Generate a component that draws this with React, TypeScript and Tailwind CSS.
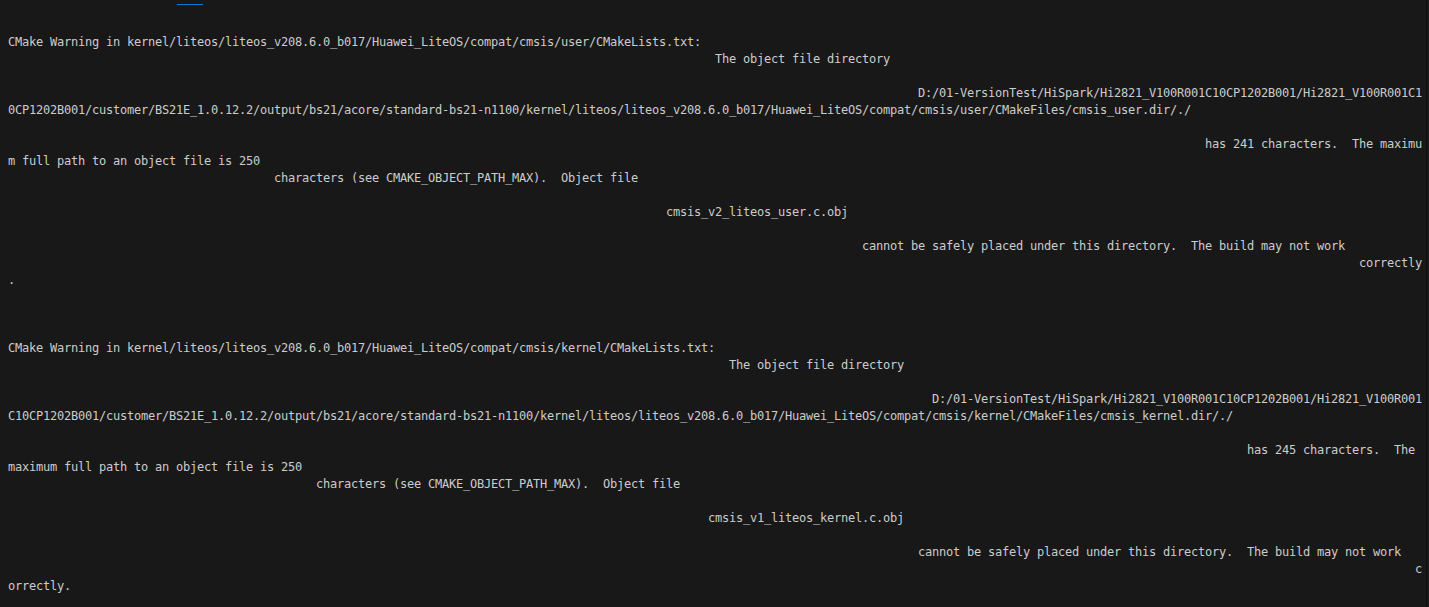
import React from "react";

type Row = [number, string];

const rows: Row[] = [
  [0, "CMake Warning in kernel/liteos/liteos_v208.6.0_b017/Huawei_LiteOS/compat/cmsis/user/CMakeLists.txt:"],
  [101, "The object file directory"],
  [0, ""],
  [130, "D:/01-VersionTest/HiSpark/Hi2821_V100R001C10CP1202B001/Hi2821_V100R001C1"],
  [0, "0CP1202B001/customer/BS21E_1.0.12.2/output/bs21/acore/standard-bs21-n1100/kernel/liteos/liteos_v208.6.0_b017/Huawei_LiteOS/compat/cmsis/user/CMakeFiles/cmsis_user.dir/./"],
  [0, ""],
  [171, "has 241 characters.  The maximu"],
  [0, "m full path to an object file is 250"],
  [38, "characters (see CMAKE_OBJECT_PATH_MAX).  Object file"],
  [0, ""],
  [94, "cmsis_v2_liteos_user.c.obj"],
  [0, ""],
  [122, "cannot be safely placed under this directory.  The build may not work"],
  [193, "correctly"],
  [0, "."],
  [0, ""],
  [0, ""],
  [0, ""],
  [0, "CMake Warning in kernel/liteos/liteos_v208.6.0_b017/Huawei_LiteOS/compat/cmsis/kernel/CMakeLists.txt:"],
  [103, "The object file directory"],
  [0, ""],
  [132, "D:/01-VersionTest/HiSpark/Hi2821_V100R001C10CP1202B001/Hi2821_V100R001"],
  [0, "C10CP1202B001/customer/BS21E_1.0.12.2/output/bs21/acore/standard-bs21-n1100/kernel/liteos/liteos_v208.6.0_b017/Huawei_LiteOS/compat/cmsis/kernel/CMakeFiles/cmsis_kernel.dir/./"],
  [0, ""],
  [177, "has 245 characters.  The"],
  [0, "maximum full path to an object file is 250"],
  [44, "characters (see CMAKE_OBJECT_PATH_MAX).  Object file"],
  [0, ""],
  [100, "cmsis_v1_liteos_kernel.c.obj"],
  [0, ""],
  [130, "cannot be safely placed under this directory.  The build may not work"],
  [201, "c"],
  [0, "orrectly."],
];

export default function App() {
  return (
    <div className="flex h-[607px] w-[1429px] overflow-hidden bg-[#181818]">
      <div className="flex min-w-0 flex-1 flex-col">
        <div className="h-[34px] shrink-0">
          <div className="ml-[177px] mt-[4px] h-px w-[26px] bg-[#0078d4]" />
        </div>
        <div
          className="pl-[8px] text-[12px] leading-[17px] tracking-[-0.2246px] text-[#cccccc]"
          style={{ fontFamily: '"DejaVu Sans Mono", "Liberation Mono", monospace' }}
        >
          {rows.map(([col, text], i) => (
            <div key={i} className="h-[17px] whitespace-pre">
              {" ".repeat(col) + text}
            </div>
          ))}
        </div>
      </div>
      <div className="w-[3px] shrink-0 border-l border-[#0f0f0f]" />
    </div>
  );
}
